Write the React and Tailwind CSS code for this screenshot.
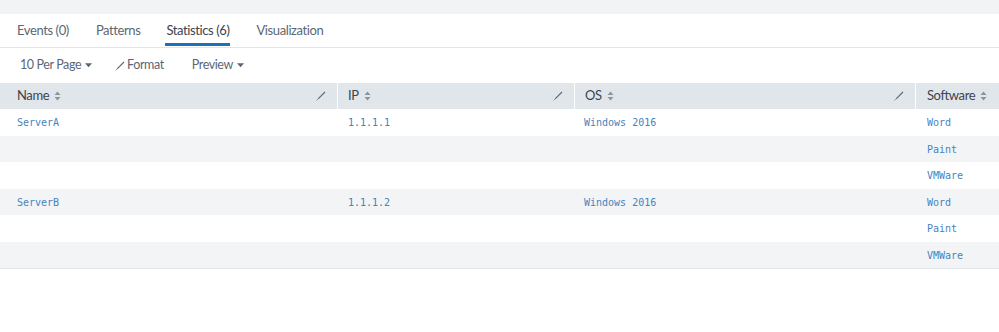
import React from "react";

const rows = [
  { name: "ServerA", ip: "1.1.1.1", os: "Windows 2016", sw: "Word" },
  { name: "", ip: "", os: "", sw: "Paint" },
  { name: "", ip: "", os: "", sw: "VMWare" },
  { name: "ServerB", ip: "1.1.1.2", os: "Windows 2016", sw: "Word" },
  { name: "", ip: "", os: "", sw: "Paint" },
  { name: "", ip: "", os: "", sw: "VMWare" },
];

const cols = [
  { label: "Name", pad: "pl-[17px]", pencil: true },
  { label: "IP", pad: "pl-[10px]", pencil: true },
  { label: "OS", pad: "pl-[10px]", pencil: true },
  { label: "Software", pad: "pl-[11px]", pencil: false },
];

function Pencil({ className = "" }) {
  return (
    <svg width="10" height="10" viewBox="0 0 10 10" className={className}>
      <path d="M8.6 0.6 L9.4 1.4 L3 7.8 L1.6 8.4 L2.2 7 Z" fill="currentColor" />
      <path d="M1.6 8.4 L0.6 9.4" stroke="currentColor" strokeWidth="0.8" />
    </svg>
  );
}

function Sort() {
  return (
    <svg width="7" height="10" viewBox="0 0 7 10" className="ml-[5px] text-[#8b96a1]">
      <path d="M3.5 0.5 L6.5 4 L0.5 4 Z" fill="currentColor" />
      <path d="M3.5 9.5 L6.5 6 L0.5 6 Z" fill="currentColor" />
    </svg>
  );
}

function Caret() {
  return (
    <svg width="7" height="5" viewBox="0 0 8 5" className="ml-[4px]">
      <path d="M0 0 L8 0 L4 4.5 Z" fill="currentColor" />
    </svg>
  );
}

export default function App() {
  const ui = { fontFamily: "Lato, 'Open Sans', sans-serif" };
  const mono = { fontFamily: "'DejaVu Sans Mono', 'Liberation Mono', monospace" };

  return (
    <div className="w-[999px] h-[332px] bg-white overflow-hidden" style={ui}>
      <div className="h-[14px] bg-[#f2f3f5]" />

      {/* tabs */}
      <div className="h-[34px] flex items-stretch border-b border-[#e1e6eb] text-[13px] tracking-[-0.4px] text-[#5c6773]">
        <div className="ml-[17px] flex items-center">Events (0)</div>
        <div className="ml-[27px] flex items-center">Patterns</div>
        <div className="ml-[26px] flex items-center relative text-[#3c444d]">
          Statistics (6)
          <div className="absolute left-[-1px] right-[-1px] bottom-[1px] h-[3px] bg-[#1a73b8]" />
        </div>
        <div className="ml-[27px] flex items-center">Visualization</div>
      </div>

      {/* toolbar */}
      <div className="h-[35px] flex items-center text-[12.5px] tracking-[-0.4px] text-[#5c6773]">
        <div className="ml-[20px] flex items-center">
          10 Per Page
          <Caret />
        </div>
        <div className="ml-[23px] flex items-center">
          <Pencil className="mr-[2px]" />
          Format
        </div>
        <div className="ml-[28px] flex items-center">
          Preview
          <Caret />
        </div>
      </div>

      {/* table */}
      <div className="grid grid-cols-[338px_237px_341px_1fr]">
        {cols.map((c, i) => (
          <div
            key={c.label}
            className={`h-[26px] bg-[#e1e6eb] flex items-center text-[13px] tracking-[-0.4px] text-[#3c444d] ${c.pad} ${
              i < 3 ? "pr-[11px] border-r border-white" : ""
            }`}
          >
            <span>{c.label}</span>
            <Sort />
            {c.pencil && <Pencil className="ml-auto text-[#5c6773]" />}
          </div>
        ))}
      </div>
      <div className="border-b border-[#e1e6eb]">
        {rows.map((r, i) => (
          <div
            key={i}
            className={`grid grid-cols-[338px_237px_341px_1fr] h-[26.5px] items-center text-[10px] text-[#4583c0] ${
              i % 2 === 1 ? "bg-[#f2f4f5]" : "bg-white"
            }`}
            style={mono}
          >
            <div className="pl-[17px] pt-[1px]">{r.name}</div>
            <div className="pl-[10px] pt-[1px]">{r.ip}</div>
            <div className="pl-[9px] pt-[1px]">{r.os}</div>
            <div className="pl-[11px] pt-[1px]">{r.sw}</div>
          </div>
        ))}
      </div>
    </div>
  );
}
